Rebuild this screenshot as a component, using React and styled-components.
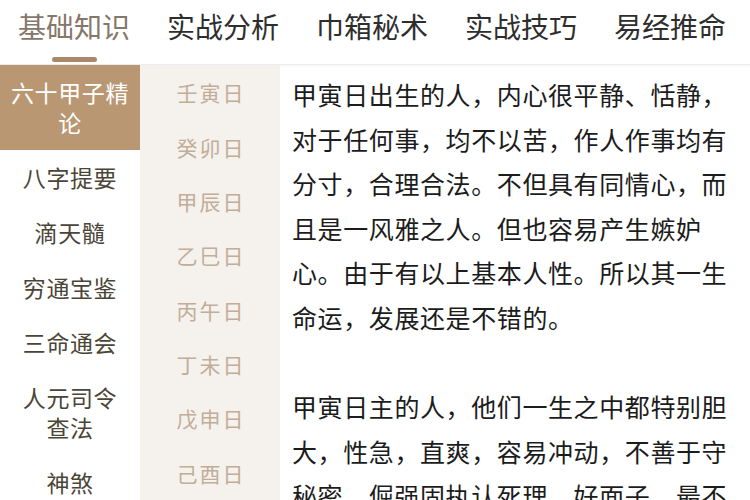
import React, { useState } from 'react';
import styled, { createGlobalStyle } from 'styled-components';

const GlobalStyle = createGlobalStyle`
  html, body {
    margin: 0;
    padding: 0;
    background: #ffffff;
  }
  body {
    font-family: "Noto Sans CJK SC", "Noto Sans", sans-serif;
    overflow: hidden;
  }
`;

const Page = styled.div`
  width: 750px;
  height: 500px;
  overflow: hidden;
  display: flex;
  flex-direction: column;
  background: #ffffff;
`;

const TabBar = styled.div`
  height: 64px;
  flex-shrink: 0;
  display: flex;
  align-items: flex-start;
  gap: 37px;
  padding-left: 18px;
  border-bottom: 1px solid #ececec;
  box-shadow: 0 1px 2px rgba(0, 0, 0, 0.04);
`;

const Tab = styled.div`
  position: relative;
  height: 64px;
  font-size: 28px;
  line-height: 52px;
  white-space: nowrap;
  color: ${(props) => (props.active ? '#85776a' : '#2e2e2e')};
  cursor: pointer;
`;

const Indicator = styled.span`
  position: absolute;
  left: 34px;
  bottom: 2px;
  width: 45px;
  height: 5px;
  border-radius: 3px;
  background: #a88a6a;
`;

const Body = styled.div`
  flex: 1;
  display: flex;
  min-height: 0;
`;

const SideMenu = styled.div`
  width: 140px;
  flex-shrink: 0;
  display: flex;
  flex-direction: column;
`;

const SideItem = styled.div`
  padding: 12px 6px 13px;
  font-size: 23px;
  line-height: 30px;
  letter-spacing: 0.6px;
  text-align: center;
  white-space: pre-line;
  color: ${(props) => (props.active ? '#ffffff' : '#4b4538')};
  background: ${(props) => (props.active ? '#b99772' : 'transparent')};
  cursor: pointer;
`;

const DayList = styled.div`
  width: 140px;
  flex-shrink: 0;
  background: #f5f2ee;
  display: flex;
  flex-direction: column;
`;

const DayItem = styled.div`
  height: 55px;
  display: flex;
  align-items: center;
  justify-content: center;
  padding-left: 2px;
  font-size: 21px;
  letter-spacing: 2px;
  color: ${(props) => (props.active ? '#a58462' : '#c2ad97')};
  cursor: pointer;
`;

const Article = styled.div`
  flex: 1;
  padding: 7px 20px 0 12px;
  color: #1c1c1c;
  font-size: 25px;
  line-height: 44.6px;
  letter-spacing: 0.6px;
`;

const Paragraph = styled.p`
  margin: 0 0 44.6px;
`;

const tabs = ['基础知识', '实战分析', '巾箱秘术', '实战技巧', '易经推命'];
const books = ['六十甲子精论', '八字提要', '滴天髓', '穷通宝鉴', '三命通会', '人元司令\n查法', '神煞'];
const days = ['壬寅日', '癸卯日', '甲辰日', '乙巳日', '丙午日', '丁未日', '戊申日', '己酉日'];

const App = () => {
  const [tab, setTab] = useState(0);
  const [book, setBook] = useState(0);
  const [day, setDay] = useState(-1);

  return (
    <>
      <GlobalStyle />
      <Page>
        <TabBar>
          {tabs.map((t, i) => (
            <Tab key={t} active={i === tab} onClick={() => setTab(i)}>
              {t}
              {i === tab && <Indicator />}
            </Tab>
          ))}
        </TabBar>
        <Body>
          <SideMenu>
            {books.map((b, i) => (
              <SideItem key={b} active={i === book} onClick={() => setBook(i)}>
                {b}
              </SideItem>
            ))}
          </SideMenu>
          <DayList>
            {days.map((d, i) => (
              <DayItem key={d} active={i === day} onClick={() => setDay(i)}>
                {d}
              </DayItem>
            ))}
          </DayList>
          <Article>
            <Paragraph>
              甲寅日出生的人，内心很平静、恬静，对于任何事，均不以苦，作人作事均有分寸，合理合法。不但具有同情心，而且是一风雅之人。但也容易产生嫉妒心。由于有以上基本人性。所以其一生命运，发展还是不错的。
            </Paragraph>
            <Paragraph>
              甲寅日主的人，他们一生之中都特别胆大，性急，直爽，容易冲动，不善于守秘密，倔强固执认死理，好面子，最不喜欢别人说自己的不是。
            </Paragraph>
          </Article>
        </Body>
      </Page>
    </>
  );
};

export default App;
